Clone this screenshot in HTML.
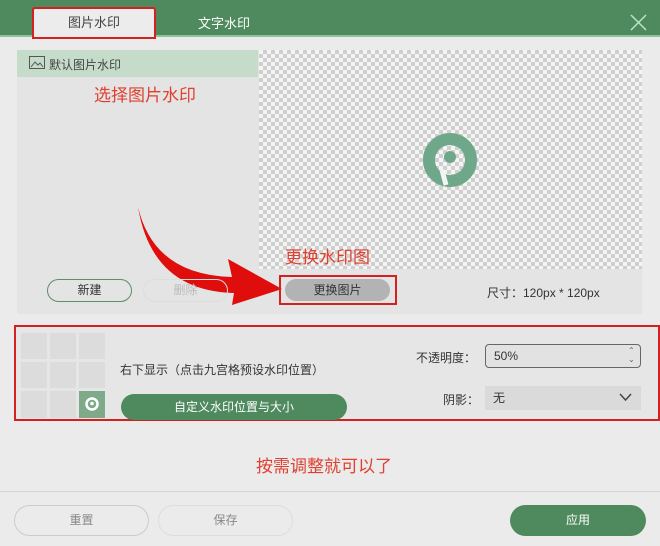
<!DOCTYPE html><html><head><meta charset="utf-8"><style>
*{margin:0;padding:0;box-sizing:border-box}
body{width:660px;height:546px;background:#ebebeb;position:relative;overflow:hidden;font-family:"Liberation Sans","Noto Sans CJK SC",sans-serif;font-size:12px;color:#333}
.a{position:absolute}
.hdr{left:0;top:0;width:660px;height:37px;background:#4e8a5e;border-bottom:2px solid #8cc49a}
.btn{position:absolute;border-radius:12px;text-align:center}
.chk{background-color:#f4f4f4;background-image:linear-gradient(45deg,#cfcfcf 25%,transparent 25%,transparent 75%,#cfcfcf 75%),linear-gradient(45deg,#cfcfcf 25%,transparent 25%,transparent 75%,#cfcfcf 75%);background-size:8px 8px;background-position:0 0,4px 4px}
.red{color:#e0402f;font-size:17px}
.cell{position:absolute;width:26px;height:26px;background:#dcdcdc}
</style></head><body>
<div class="a hdr"></div>
<div class="a" style="left:32px;top:7px;width:124px;height:32px;background:#ececec;border:2px solid #d32020;border-radius:3px 3px 0 0;text-align:center;line-height:28px;font-size:13px;color:#444">图片水印</div>
<div class="a" style="left:198px;top:13px;color:#fff;font-size:13px">文字水印</div>
<svg class="a" style="left:630px;top:14px" width="17" height="17"><path d="M1 1L16 16M16 1L1 16" stroke="#b7e6c2" stroke-width="1.5"/></svg>
<div class="a" style="left:17px;top:50px;width:625px;height:264px;background:#e4e4e4"></div>
<div class="a" style="left:17px;top:50px;width:241px;height:27px;background:#c6dccb"></div>
<svg class="a" style="left:29px;top:56px" width="16" height="13"><rect x="0.5" y="0.5" width="15" height="12" fill="none" stroke="#555"/><path d="M2 11L6 6L9 9L11 7L14 11" fill="none" stroke="#555"/></svg>
<div class="a" style="left:49px;top:56px;color:#444">默认图片水印</div>
<div class="a red" style="left:94px;top:81px">选择图片水印</div>
<div class="a chk" style="left:259px;top:50px;width:383px;height:219px"></div>
<svg class="a" style="left:420px;top:130px" width="60" height="60"><circle cx="30" cy="30" r="21" fill="none" stroke="#6fa78a" stroke-width="12"/><circle cx="30" cy="27" r="6" fill="#6fa78a"/><path d="M22 40L26 55" stroke="#f4f4f4" stroke-width="5"/></svg>
<svg class="a" style="left:132px;top:203px" width="155" height="102"><path d="M6 4Q22 72 100 74L96 56L150 86L100 102L102 90Q20 88 6 4Z" fill="#e00d0d"/></svg>
<div class="a red" style="left:285px;top:243px">更换水印图</div>
<div class="btn" style="left:47px;top:279px;width:85px;height:23px;border:1px solid #5d8f6a;line-height:21px">新建</div>
<div class="btn" style="left:143px;top:279px;width:85px;height:23px;border:1px solid #ddd;line-height:21px;color:#bbb">删除</div>
<div class="a" style="left:279px;top:275px;width:118px;height:30px;border:2px solid #d32020"></div>
<div class="btn" style="left:285px;top:279px;width:105px;height:22px;background:#b3b3b3;line-height:22px;color:#333">更换图片</div>
<div class="a" style="left:487px;top:284px;font-size:12px">尺寸：120px * 120px</div>
<div class="a" style="left:14px;top:325px;width:646px;height:96px;border:2px solid #d32020;background:#e6e6e6"></div>
<div class="cell" style="left:21px;top:333px"></div><div class="cell" style="left:50px;top:333px"></div><div class="cell" style="left:79px;top:333px"></div>
<div class="cell" style="left:21px;top:362px"></div><div class="cell" style="left:50px;top:362px"></div><div class="cell" style="left:79px;top:362px"></div>
<div class="cell" style="left:21px;top:391px;height:27px"></div><div class="cell" style="left:50px;top:391px;height:27px"></div><div class="cell" style="left:79px;top:391px;height:27px;background:#7faa8a"></div>
<svg class="a" style="left:84px;top:396px" width="16" height="16"><circle cx="8" cy="8" r="5.5" fill="none" stroke="#fff" stroke-width="2.5"/><circle cx="8" cy="7.5" r="1.8" fill="#fff"/></svg>
<div class="a" style="left:120px;top:361px;font-size:12px">右下显示（点击九宫格预设水印位置）</div>
<div class="btn" style="left:121px;top:394px;width:226px;height:26px;background:#4e8a5e;color:#fff;line-height:26px;border-radius:13px">自定义水印位置与大小</div>
<div class="a" style="left:416px;top:349px">不透明度：</div>
<div class="a" style="left:485px;top:344px;width:156px;height:24px;border:1px solid #666;border-radius:4px;background:#e2e2e2;padding-left:8px;line-height:22px">50%</div>
<div class="a" style="left:628px;top:346px;font-size:8px;line-height:9px;color:#666">⌃<br>⌄</div>
<div class="a" style="left:443px;top:391px">阴影：</div>
<div class="a" style="left:485px;top:386px;width:156px;height:24px;background:#dadada;padding-left:8px;line-height:24px">无</div>
<svg class="a" style="left:619px;top:393px" width="13" height="9"><path d="M1 1L6.5 7L12 1" fill="none" stroke="#444" stroke-width="1.5"/></svg>
<div class="a red" style="left:256px;top:452px">按需调整就可以了</div>
<div class="a" style="left:0;top:491px;width:660px;height:1px;background:#d6d6d6"></div>
<div class="btn" style="left:14px;top:505px;width:135px;height:31px;border:1px solid #ccc;line-height:29px;border-radius:16px;color:#888">重置</div>
<div class="btn" style="left:158px;top:505px;width:135px;height:31px;border:1px solid #ddd;line-height:29px;border-radius:16px;color:#888">保存</div>
<div class="btn" style="left:510px;top:505px;width:136px;height:31px;background:#4e8a5e;color:#fff;line-height:31px;border-radius:16px">应用</div>
</body></html>
